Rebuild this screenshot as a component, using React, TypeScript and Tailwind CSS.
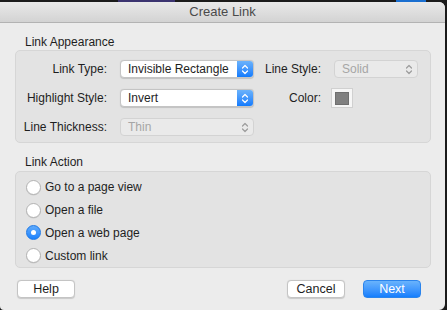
import React from 'react';

const font = { fontFamily: '"Liberation Sans", Arial, sans-serif' };

const Chevrons: React.FC<{ color: string }> = ({ color }) => (
  <svg width="8" height="11" viewBox="0 0 8 11" fill="none">
    <path d="M1.5 4 L4 1.5 L6.5 4" stroke={color} strokeWidth="1.2" strokeLinecap="round" strokeLinejoin="round" />
    <path d="M1.5 7 L4 9.5 L6.5 7" stroke={color} strokeWidth="1.2" strokeLinecap="round" strokeLinejoin="round" />
  </svg>
);

const Select: React.FC<{ value: string; width: string; disabled?: boolean }> = ({ value, width, disabled }) => {
  if (disabled) {
    return (
      <div
        className={`${width} shrink-0 h-[18px] flex items-center justify-between rounded-[4px] border border-[#d3d3d3] bg-[#eaeaea] pl-[7px] pr-[4px] text-[12px] text-[#a6a6a6] whitespace-nowrap`}
      >
        <span className="leading-none">{value}</span>
        <Chevrons color="#9c9c9c" />
      </div>
    );
  }
  return (
    <div
      className={`${width} shrink-0 h-[18px] flex items-stretch rounded-[4px] border border-[#c4c4c4] bg-white text-[12px] text-[#1e1e1e] shadow-[0_0.5px_1px_rgba(0,0,0,0.15)] overflow-hidden whitespace-nowrap`}
    >
      <span className="flex-1 flex items-center pl-[7px] leading-none overflow-hidden">{value}</span>
      <span className="w-[16px] shrink-0 flex items-center justify-center bg-gradient-to-b from-[#6ab2fb] to-[#0f7bfd]">
        <Chevrons color="#ffffff" />
      </span>
    </div>
  );
};

const Radio: React.FC<{ label: string; checked?: boolean }> = ({ label, checked }) => (
  <div className="h-[23px] flex items-center">
    {checked ? (
      <span className="w-[15px] h-[15px] rounded-full flex items-center justify-center bg-gradient-to-b from-[#5eaafb] to-[#1681fd] border border-[#1d78e6]">
        <span className="w-[5px] h-[5px] rounded-full bg-white" />
      </span>
    ) : (
      <span className="w-[15px] h-[15px] rounded-full bg-white border border-[#b3b3b3] shadow-[0_0.5px_0.5px_rgba(0,0,0,0.1)]" />
    )}
    <span className="ml-[4px] text-[12px] text-[#1e1e1e]">{label}</span>
  </div>
);

const Button: React.FC<{ label: string; primary?: boolean }> = ({ label, primary }) => (
  <div
    className={
      primary
        ? 'w-[58px] h-[18px] flex items-center justify-center rounded-[4px] bg-gradient-to-b from-[#69b3fc] to-[#127efd] text-[12.5px] text-white border border-[#2b84ec]'
        : 'w-[58px] h-[18px] flex items-center justify-center rounded-[4px] bg-white text-[12.5px] text-[#1e1e1e] border border-[#c4c4c4] shadow-[0_0.5px_1px_rgba(0,0,0,0.15)]'
    }
  >
    {label}
  </div>
);

const Label: React.FC<{ text: string; width: string }> = ({ text, width }) => (
  <span className={`${width} shrink-0 text-right text-[12px] text-[#1e1e1e] whitespace-nowrap`}>{text}</span>
);

export default function App() {
  return (
    <div className="w-[447px] h-[310px] bg-[#1b1b1b] overflow-hidden relative" style={font}>
      <div className="absolute top-0 left-[118px] w-[57px] h-[2px] bg-[#3b3470]" />
      <div className="absolute top-0 left-[396px] w-[30px] h-[2px] bg-[#1a6fd0]" />
      <div className="mt-[2px] w-[445px] h-[308px] bg-[#ececec] rounded-tr-[6px] rounded-br-[6px] rounded-bl-[4px] overflow-hidden flex flex-col">
        <div className="h-[21px] shrink-0 flex items-center justify-center bg-gradient-to-b from-[#e9e9e9] to-[#d3d3d3] border-b border-[#b3b3b3] text-[13px] text-[#4a4a4a]">
          Create Link
        </div>

        <div className="pl-[25px] mt-[12px] h-[15px] text-[12px] leading-[15px] text-[#1e1e1e]">Link Appearance</div>
        <div className="ml-[15px] w-[416px] h-[93px] rounded-[5px] bg-[#e3e3e3] border border-[#d6d6d6] pt-[9px] flex flex-col gap-[11px]">
          <div className="flex items-center h-[18px]">
            <Label text="Link Type:" width="w-[91px]" />
            <span className="ml-[13px] shrink-0">
              <Select value="Invisible Rectangle" width="w-[134px]" />
            </span>
            <Label text="Line Style:" width="w-[67px]" />
            <span className="ml-[13px] shrink-0">
              <Select value="Solid" width="w-[84px]" disabled />
            </span>
          </div>
          <div className="flex items-center h-[18px]">
            <Label text="Highlight Style:" width="w-[91px]" />
            <span className="ml-[13px] shrink-0">
              <Select value="Invert" width="w-[134px]" />
            </span>
            <Label text="Color:" width="w-[67px]" />
            <span className="ml-[10px] shrink-0 w-[22px] h-[20px] bg-[#f6f6f6] border border-[#d0d0d0] flex items-center justify-center">
              <span className="w-[14px] h-[13px] bg-[#808080] border border-[#6f6f6f]" />
            </span>
          </div>
          <div className="flex items-center h-[18px]">
            <Label text="Line Thickness:" width="w-[91px]" />
            <span className="ml-[13px] shrink-0">
              <Select value="Thin" width="w-[134px]" disabled />
            </span>
          </div>
        </div>

        <div className="pl-[25px] mt-[12px] h-[15px] text-[12px] leading-[15px] text-[#1e1e1e]">Link Action</div>
        <div className="ml-[15px] mt-[1px] w-[416px] h-[97px] rounded-[5px] bg-[#e3e3e3] border border-[#d6d6d6] pt-[4px] pl-[10px] flex flex-col">
          <Radio label="Go to a page view" />
          <Radio label="Open a file" />
          <Radio label="Open a web page" checked />
          <Radio label="Custom link" />
        </div>

        <div className="mt-[12px] pl-[17px] flex items-center">
          <Button label="Help" />
          <span className="ml-[212px]">
            <Button label="Cancel" />
          </span>
          <span className="ml-[18px]">
            <Button label="Next" primary />
          </span>
        </div>
      </div>
    </div>
  );
}
